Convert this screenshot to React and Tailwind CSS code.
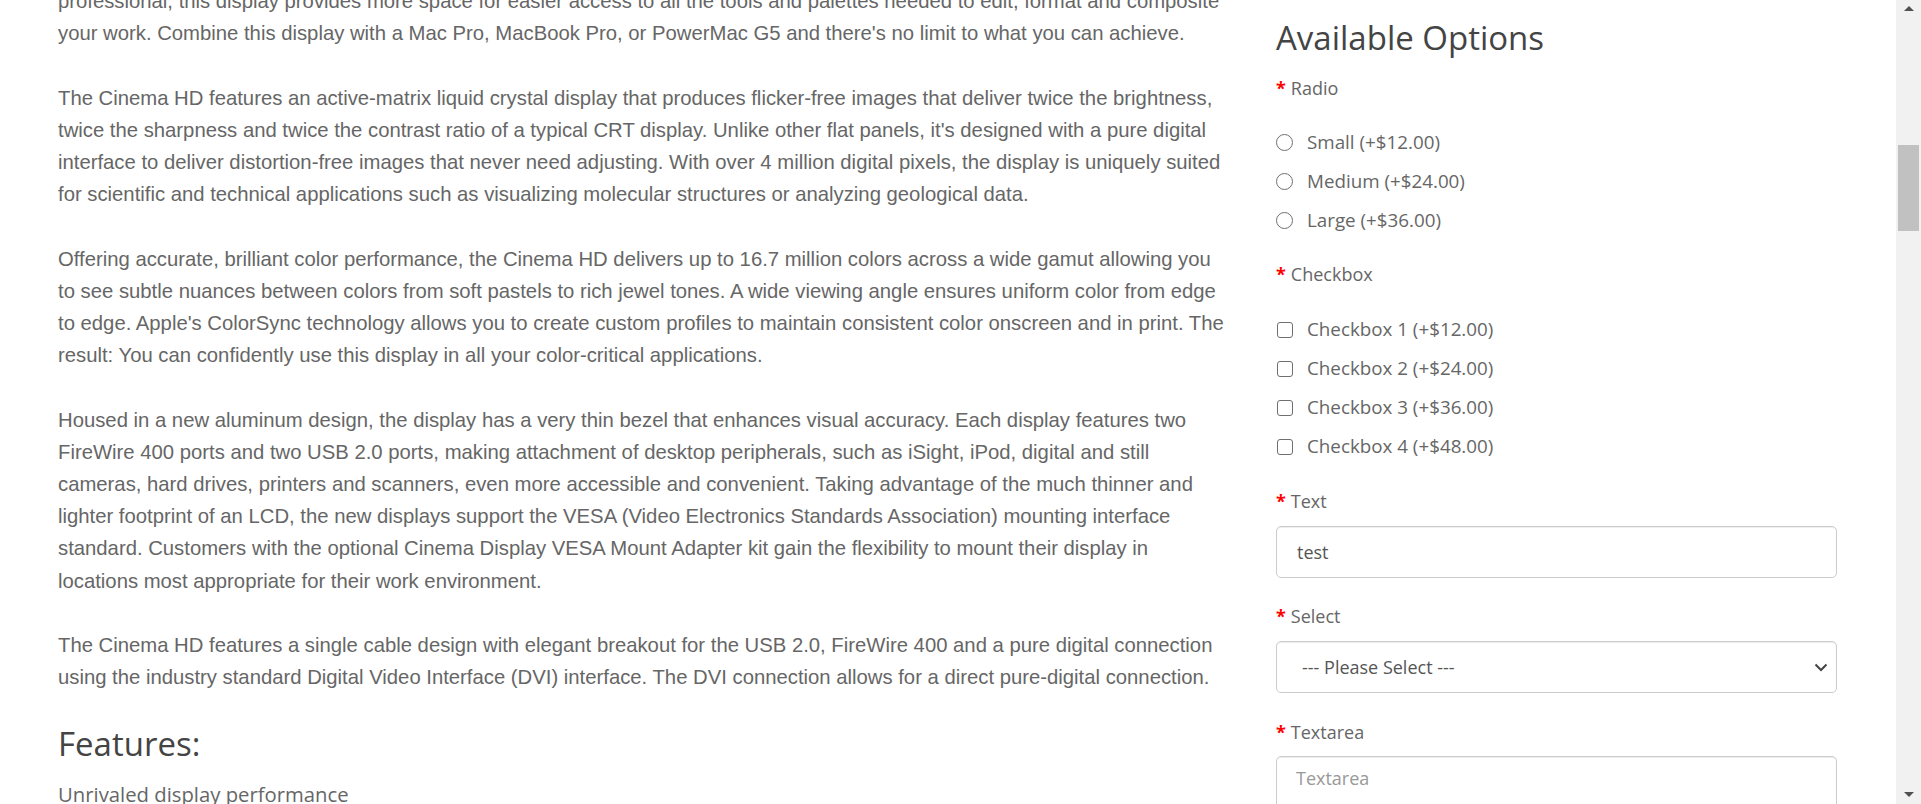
const paragraphs = [
  [
    "professional, this display provides more space for easier access to all the tools and palettes needed to edit, format and composite",
    "your work. Combine this display with a Mac Pro, MacBook Pro, or PowerMac G5 and there's no limit to what you can achieve.",
  ],
  [
    "The Cinema HD features an active-matrix liquid crystal display that produces flicker-free images that deliver twice the brightness,",
    "twice the sharpness and twice the contrast ratio of a typical CRT display. Unlike other flat panels, it's designed with a pure digital",
    "interface to deliver distortion-free images that never need adjusting. With over 4 million digital pixels, the display is uniquely suited",
    "for scientific and technical applications such as visualizing molecular structures or analyzing geological data.",
  ],
  [
    "Offering accurate, brilliant color performance, the Cinema HD delivers up to 16.7 million colors across a wide gamut allowing you",
    "to see subtle nuances between colors from soft pastels to rich jewel tones. A wide viewing angle ensures uniform color from edge",
    "to edge. Apple's ColorSync technology allows you to create custom profiles to maintain consistent color onscreen and in print. The",
    "result: You can confidently use this display in all your color-critical applications.",
  ],
  [
    "Housed in a new aluminum design, the display has a very thin bezel that enhances visual accuracy. Each display features two",
    "FireWire 400 ports and two USB 2.0 ports, making attachment of desktop peripherals, such as iSight, iPod, digital and still",
    "cameras, hard drives, printers and scanners, even more accessible and convenient. Taking advantage of the much thinner and",
    "lighter footprint of an LCD, the new displays support the VESA (Video Electronics Standards Association) mounting interface",
    "standard. Customers with the optional Cinema Display VESA Mount Adapter kit gain the flexibility to mount their display in",
    "locations most appropriate for their work environment.",
  ],
  [
    "The Cinema HD features a single cable design with elegant breakout for the USB 2.0, FireWire 400 and a pure digital connection",
    "using the industry standard Digital Video Interface (DVI) interface. The DVI connection allows for a direct pure-digital connection.",
  ],
];

const radios = ["Small (+$12.00)", "Medium (+$24.00)", "Large (+$36.00)"];
const checks = [
  "Checkbox 1 (+$12.00)",
  "Checkbox 2 (+$24.00)",
  "Checkbox 3 (+$36.00)",
  "Checkbox 4 (+$48.00)",
];

function Label({ children, className = "" }) {
  return (
    <div className={"flex items-center h-[27px] text-[18px] text-[#666] " + className}>
      <span className="text-[#f00] font-bold mr-[5px]">*</span>
      {children}
    </div>
  );
}

export default function App() {
  return (
    <div className="flex h-screen overflow-hidden bg-white">
      <div className="flex flex-1 min-w-0">
        {/* description */}
        <div className="w-[1276px] shrink-0 pl-[58px] -mt-[15px] font-['Liberation_Sans',Arial,sans-serif] text-[20.3px] leading-[32.2px] text-[#666]">
          {paragraphs.map((lines, i) => (
            <p key={i} className="mb-[32.2px] whitespace-nowrap">
              {lines.map((l, j) => (
                <span key={j}>
                  {l}
                  {j < lines.length - 1 && <br />}
                </span>
              ))}
            </p>
          ))}
          <h2 className="font-['Open_Sans',sans-serif] text-[33px] leading-[40px] text-[#444] -mt-[2px]">
            Features:
          </h2>
          <p className="font-['Open_Sans',sans-serif] text-[20.3px] leading-[30px] text-[#666] mt-[15px]">
            Unrivaled display performance
          </p>
        </div>

        {/* options */}
        <div className="w-[561px] shrink-0 font-['Open_Sans',sans-serif]">
          <h3 className="mt-[18px] text-[33px] leading-[40px] text-[#444]">Available Options</h3>
          <Label className="mt-[17px]">Radio</Label>
          <div className="mt-[27px] flex flex-col gap-[12px]">
            {radios.map((r) => (
              <div key={r} className="flex items-center h-[27px] text-[18.8px] text-[#666]">
                <span className="w-[17px] h-[17px] rounded-full border border-[#6f6f6f] mr-[14px]" />
                {r}
              </div>
            ))}
          </div>
          <Label className="mt-[27px]">Checkbox</Label>
          <div className="mt-[28px] flex flex-col gap-[12px]">
            {checks.map((c) => (
              <div key={c} className="flex items-center h-[27px] text-[18.8px] text-[#666]">
                <span className="w-[16px] h-[16px] rounded-[3px] border border-[#6f6f6f] ml-[1px] mr-[14px]" />
                {c}
              </div>
            ))}
          </div>
          <Label className="mt-[28px]">Text</Label>
          <div className="mt-[11px] h-[52px] rounded-[5px] border border-[#ccc] shadow-[inset_0_1px_1px_rgba(0,0,0,0.075)] flex items-center pl-[20px] text-[18px] text-[#555]">
            test
          </div>
          <Label className="mt-[25px]">Select</Label>
          <div className="mt-[11px] h-[52px] rounded-[5px] border border-[#ccc] shadow-[inset_0_1px_1px_rgba(0,0,0,0.075)] flex items-center justify-between pl-[25px] pr-[7px] text-[18px] text-[#555]">
            <span>--- Please Select ---</span>
            <svg width="14" height="10" viewBox="0 0 14 10" className="mr-[1px]">
              <path d="M1.5 2.5 L7 8 L12.5 2.5" fill="none" stroke="#444" strokeWidth="2" />
            </svg>
          </div>
          <Label className="mt-[26px]">Textarea</Label>
          <div className="mt-[10px] h-[120px] rounded-[5px] border border-[#ccc] shadow-[inset_0_1px_1px_rgba(0,0,0,0.075)] pl-[19px] pt-[8px] text-[18px] text-[#999]">
            Textarea
          </div>
        </div>
      </div>

      {/* scrollbar */}
      <div className="w-[25px] shrink-0 bg-[#f1f1f1] flex flex-col items-center">
        <svg width="12" height="17" viewBox="0 0 12 17" className="mt-[1px]">
          <path d="M1 10 L6 5 L11 10 Z" fill="#505050" />
        </svg>
        <div className="mt-[127px] w-[21px] h-[86px] bg-[#c1c1c1]" />
        <div className="flex-1" />
        <svg width="12" height="17" viewBox="0 0 12 17" className="mb-[2px]">
          <path d="M1 7 L6 12 L11 7 Z" fill="#505050" />
        </svg>
      </div>
    </div>
  );
}
